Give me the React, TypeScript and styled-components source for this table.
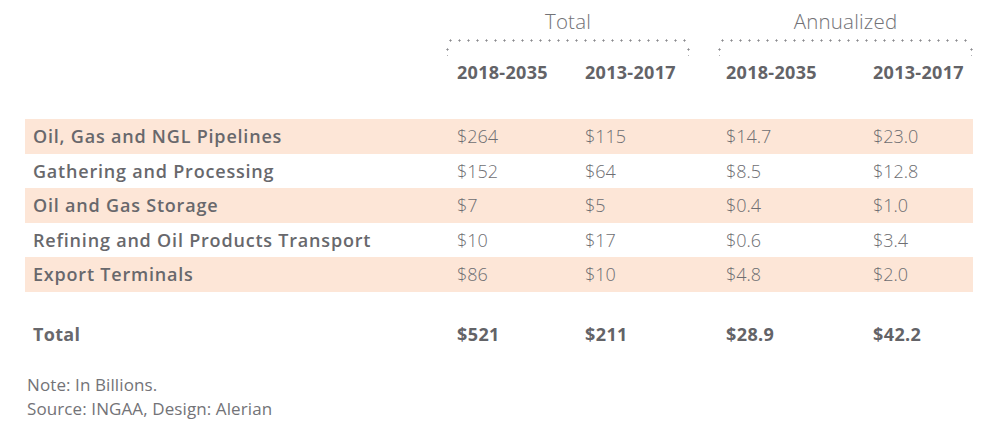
import React from "react";
import styled, { createGlobalStyle } from "styled-components";

const GlobalStyle = createGlobalStyle`
  html, body {
    margin: 0;
    padding: 0;
    background: #ffffff;
  }
  body {
    font-family: "Open Sans", "Noto Sans", sans-serif;
    color: #68686c;
  }
`;

const COLS = "424px 128px 141px 147px 108px";

const Page = styled.div`
  width: 1000px;
  height: 442px;
  padding: 0 27px 0 25px;
  box-sizing: border-box;
  overflow: hidden;
`;

const GroupRow = styled.div`
  display: grid;
  grid-template-columns: ${COLS};
  height: 56px;
`;

const Group = styled.div<{ $ml: number; $mr: number }>`
  grid-column: span 2;
  display: flex;
  flex-direction: column;
  align-items: stretch;
  margin-left: ${(p) => p.$ml}px;
  margin-right: ${(p) => p.$mr}px;
  padding-top: 9px;
`;

const GroupTitle = styled.div`
  font-size: 20.5px;
  font-weight: 300;
  line-height: 24px;
  letter-spacing: 0.2px;
  text-align: center;
  color: #727276;
`;

const Bracket = styled.div`
  position: relative;
  margin-top: 6px;
  height: 17px;
  background-image: radial-gradient(circle, #8a8a8e 0.9px, transparent 1.2px);
  background-size: 9px 3px;
  background-repeat: repeat-x;
  background-position: 0 0;

  &::before,
  &::after {
    content: "";
    position: absolute;
    top: 7px;
    width: 3px;
    height: 10px;
    background-image: radial-gradient(circle, #8a8a8e 0.9px, transparent 1.2px);
    background-size: 3px 7px;
    background-repeat: repeat-y;
  }
  &::before {
    left: 0;
  }
  &::after {
    right: 0;
  }
`;

const YearRow = styled.div`
  display: grid;
  grid-template-columns: ${COLS};
  margin-top: 4px;
  height: 24px;
  margin-bottom: 35px;
`;

const YearCell = styled.div`
  padding-left: 8px;
  font-size: 18px;
  font-weight: 700;
  line-height: 24px;
  letter-spacing: 0.3px;
  color: #636367;
`;

const Row = styled.div<{ $shaded?: boolean }>`
  display: grid;
  grid-template-columns: ${COLS};
  height: 34.5px;
  align-items: center;
  background: ${(p) => (p.$shaded ? "#fde6d7" : "transparent")};
`;

const Label = styled.div<{ $bold?: boolean }>`
  padding-left: 8px;
  font-size: 18px;
  font-weight: ${(p) => (p.$bold ? 700 : 600)};
  line-height: 24px;
  letter-spacing: ${(p) => (p.$bold ? "0.3px" : "0.8px")};
  color: #68686c;
  white-space: nowrap;
`;

const Value = styled.div<{ $bold?: boolean }>`
  padding-left: 8px;
  font-size: 18px;
  font-weight: ${(p) => (p.$bold ? 700 : 300)};
  line-height: 24px;
  letter-spacing: ${(p) => (p.$bold ? "0.4px" : "0")};
  color: ${(p) => (p.$bold ? "#636367" : "#6e6e72")};
`;

const TotalRow = styled(Row)`
  margin-top: 30px;
  height: 24px;
`;

const Notes = styled.div`
  margin-top: 27px;
  padding-left: 2px;
  font-size: 17px;
  font-weight: 400;
  line-height: 24px;
  letter-spacing: 0.1px;
  color: #737377;
`;

const rows = [
  ["Oil, Gas and NGL Pipelines", "$264", "$115", "$14.7", "$23.0"],
  ["Gathering and Processing", "$152", "$64", "$8.5", "$12.8"],
  ["Oil and Gas Storage", "$7", "$5", "$0.4", "$1.0"],
  ["Refining and Oil Products Transport", "$10", "$17", "$0.6", "$3.4"],
  ["Export Terminals", "$86", "$10", "$4.8", "$2.0"],
];

const years = ["2018-2035", "2013-2017", "2018-2035", "2013-2017"];

export default function App() {
  return (
    <Page>
      <GlobalStyle />
      <GroupRow>
        <div />
        <Group $ml={-3} $mr={28}>
          <GroupTitle>Total</GroupTitle>
          <Bracket />
        </Group>
        <Group $ml={0} $mr={0}>
          <GroupTitle>Annualized</GroupTitle>
          <Bracket />
        </Group>
      </GroupRow>
      <YearRow>
        <div />
        {years.map((y, i) => (
          <YearCell key={i}>{y}</YearCell>
        ))}
      </YearRow>
      {rows.map((r, i) => (
        <Row key={r[0]} $shaded={i % 2 === 0}>
          <Label>{r[0]}</Label>
          {r.slice(1).map((v, j) => (
            <Value key={j}>{v}</Value>
          ))}
        </Row>
      ))}
      <TotalRow>
        <Label $bold>Total</Label>
        <Value $bold>$521</Value>
        <Value $bold>$211</Value>
        <Value $bold>$28.9</Value>
        <Value $bold>$42.2</Value>
      </TotalRow>
      <Notes>
        Note: In Billions.
        <br />
        Source: INGAA, Design: Alerian
      </Notes>
    </Page>
  );
}
